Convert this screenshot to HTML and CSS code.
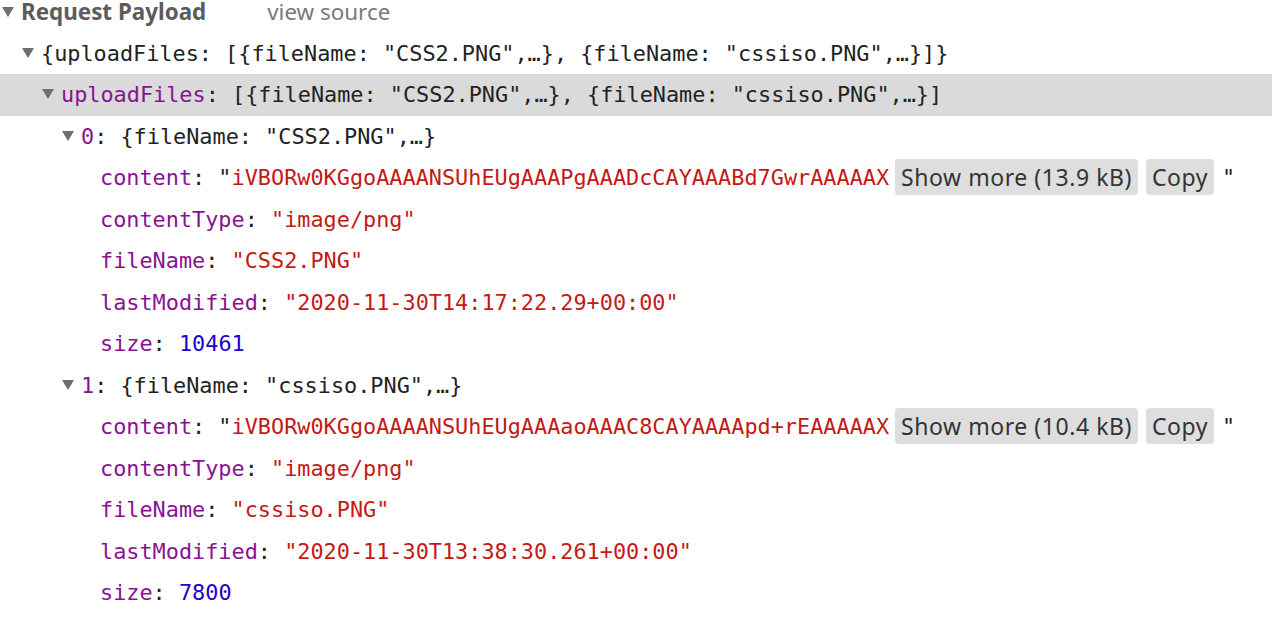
FILE: index.html
```html
<!DOCTYPE html>
<html lang="en">
<head>
  <meta charset="UTF-8">
  <title>Request Payload</title>
  <link rel="stylesheet" href="styles.css">
</head>
<body>

<!-- Request payload section -->
<div class="payload">
  <div class="section-header">
    <span class="arrow"></span><span class="title">Request Payload</span><span class="view-source">view source</span>
  </div>

  <div class="row l0"><span class="arrow"></span>{uploadFiles: [{fileName: "CSS2.PNG",…}, {fileName: "cssiso.PNG",…}]}</div>
  <div class="row l1 selected"><span class="arrow"></span><span class="key">uploadFiles</span>: [{fileName: "CSS2.PNG",…}, {fileName: "cssiso.PNG",…}]</div>

  <div class="row l2"><span class="arrow"></span><span class="key">0</span>: {fileName: "CSS2.PNG",…}</div>
  <div class="row leaf"><span class="key">content</span>: "<span class="str">iVBORw0KGgoAAAANSUhEUgAAAPgAAADcCAYAAABd7GwrAAAAAX</span><button class="btn">Show more (13.9 kB)</button><button class="btn">Copy</button>"</div>
  <div class="row leaf"><span class="key">contentType</span>: <span class="str">"image/png"</span></div>
  <div class="row leaf"><span class="key">fileName</span>: <span class="str">"CSS2.PNG"</span></div>
  <div class="row leaf"><span class="key">lastModified</span>: <span class="str">"2020-11-30T14:17:22.29+00:00"</span></div>
  <div class="row leaf"><span class="key">size</span>: <span class="num">10461</span></div>

  <div class="row l2"><span class="arrow"></span><span class="key">1</span>: {fileName: "cssiso.PNG",…}</div>
  <div class="row leaf"><span class="key">content</span>: "<span class="str">iVBORw0KGgoAAAANSUhEUgAAAaoAAAC8CAYAAAApd+rEAAAAAX</span><button class="btn">Show more (10.4 kB)</button><button class="btn">Copy</button>"</div>
  <div class="row leaf"><span class="key">contentType</span>: <span class="str">"image/png"</span></div>
  <div class="row leaf"><span class="key">fileName</span>: <span class="str">"cssiso.PNG"</span></div>
  <div class="row leaf"><span class="key">lastModified</span>: <span class="str">"2020-11-30T13:38:30.261+00:00"</span></div>
  <div class="row leaf"><span class="key">size</span>: <span class="num">7800</span></div>
</div>

</body>
</html>
```

FILE: styles.css
```css
/* Global */
body {
  margin: 0;
  padding: 0;
  background-color: #ffffff;
  overflow: hidden;
}

.payload {
  margin-top: -9px;
}

/* Section header */
.section-header {
  height: 41.5px;
  line-height: 41.5px;
  padding-left: 2px;
  font-family: "Noto Sans", "Open Sans", sans-serif;
  font-size: 22.4px;
  white-space: nowrap;
}

.section-header .title {
  font-weight: bold;
  color: #5c5c5c;
}

.section-header .view-source {
  margin-left: 61px;
  color: #7a7a7a;
}

/* Expand triangle */
.arrow {
  display: inline-block;
  width: 0;
  height: 0;
  border-left: 6.5px solid transparent;
  border-right: 6.5px solid transparent;
  border-top: 10px solid #6e6e6e;
  margin-right: 7px;
  vertical-align: middle;
  position: relative;
  top: -2px;
}

/* Tree rows */
.row {
  height: 41.5px;
  line-height: 41.5px;
  font-family: "DejaVu Sans Mono", "Liberation Mono", monospace;
  font-size: 21.85px;
  color: #222222;
  white-space: nowrap;
}

.row.selected {
  background-color: #dadada;
}

.l0 { padding-left: 22px; }
.l1 { padding-left: 42px; }
.l2 { padding-left: 62px; }
.leaf { padding-left: 100px; }

.key { color: #881391; }
.str { color: #c41a16; }
.num { color: #1c00cf; }

/* Show more / Copy buttons */
.btn {
  display: inline-block;
  height: 36px;
  line-height: 36px;
  padding: 0 6px;
  margin: 0 8px 0 6px;
  border: none;
  border-radius: 4px;
  background-color: #dedede;
  color: #333333;
  font-family: "Noto Sans", "Open Sans", sans-serif;
  font-size: 23px;
  letter-spacing: 0.55px;
  vertical-align: middle;
  position: relative;
  top: -2px;
}

.btn + .btn {
  margin-left: 0;
}
```
